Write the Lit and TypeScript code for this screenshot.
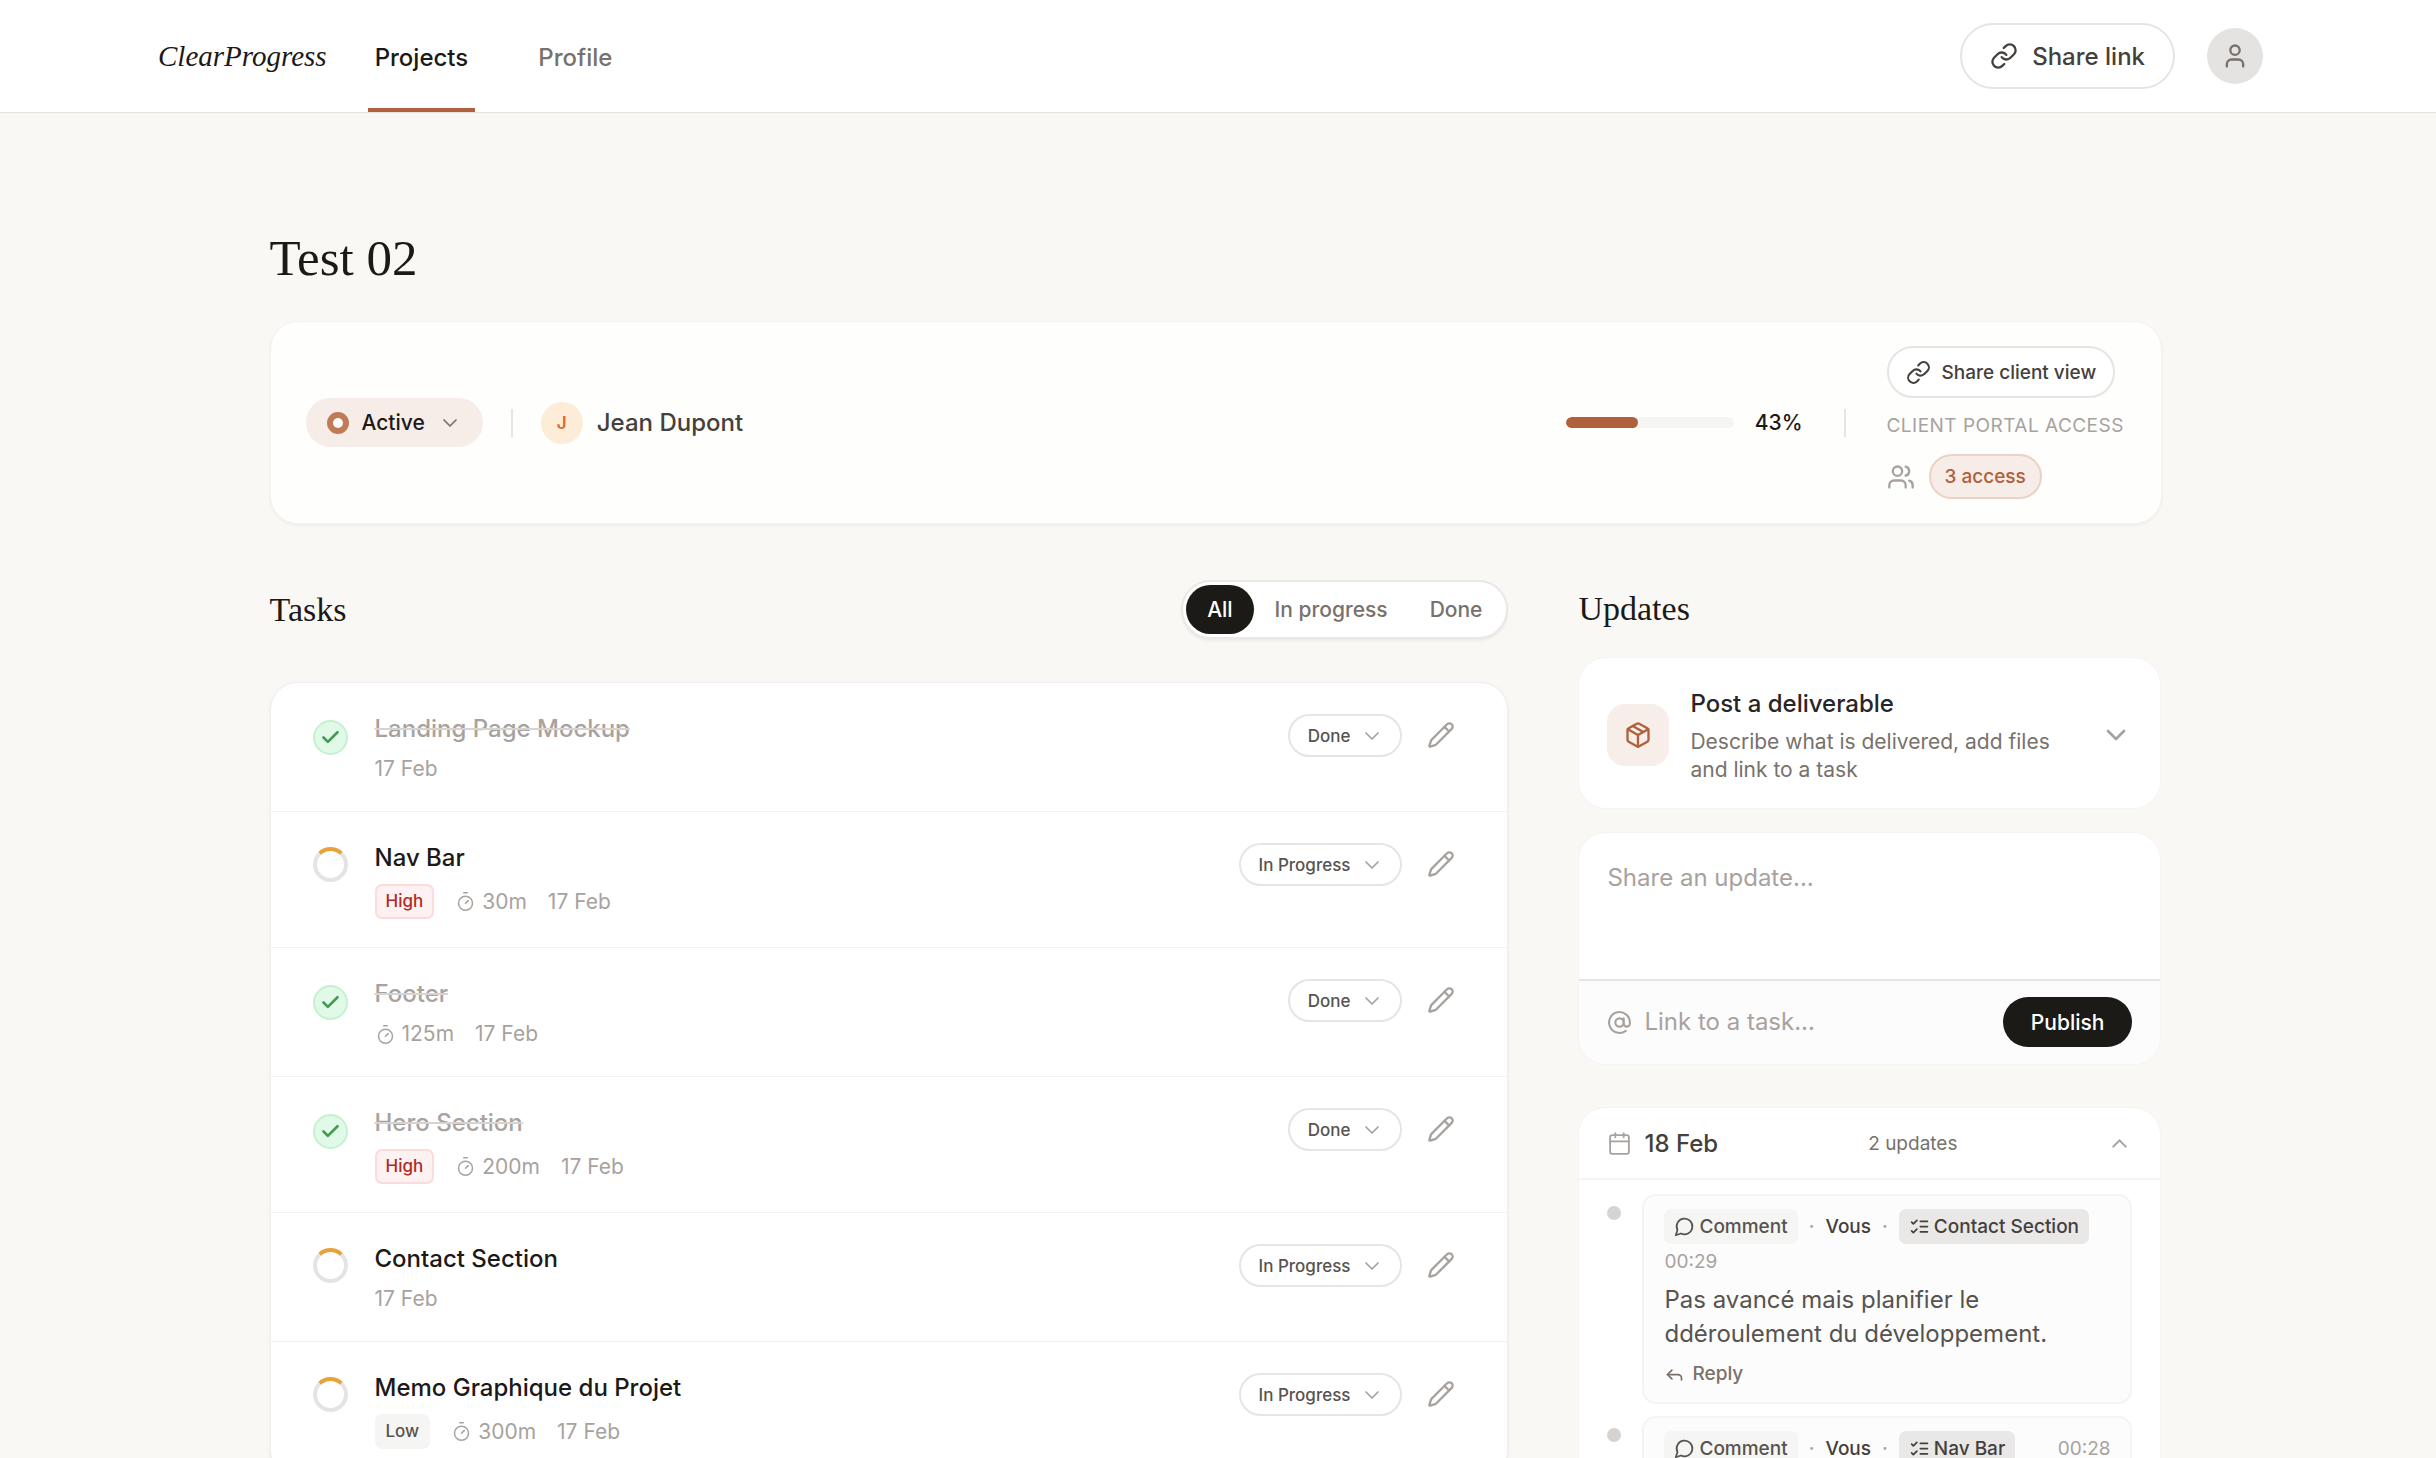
import { LitElement, html, css, svg, nothing, type TemplateResult } from "lit";
import { customElement, property, state } from "lit/decorators.js";
import { classMap } from "lit/directives/class-map.js";

type Status = "Done" | "In Progress";

interface Task {
  title: string;
  status: Status;
  priority?: "High" | "Low";
  minutes?: number;
  date: string;
}

interface Update {
  author: string;
  task: string;
  time: string;
  text?: string;
}

const TASKS: Task[] = [
  { title: "Landing Page Mockup", status: "Done", date: "17 Feb" },
  { title: "Nav Bar", status: "In Progress", priority: "High", minutes: 30, date: "17 Feb" },
  { title: "Footer", status: "Done", minutes: 125, date: "17 Feb" },
  { title: "Hero Section", status: "Done", priority: "High", minutes: 200, date: "17 Feb" },
  { title: "Contact Section", status: "In Progress", date: "17 Feb" },
  { title: "Memo Graphique du Projet", status: "In Progress", priority: "Low", minutes: 300, date: "17 Feb" },
];

const UPDATES: Update[] = [
  {
    author: "Vous",
    task: "Contact Section",
    time: "00:29",
    text: "Pas avancé mais planifier le ddéroulement du développement.",
  },
  { author: "Vous", task: "Nav Bar", time: "00:28" },
];

const ICONS: Record<string, TemplateResult> = {
  link: svg`<path d="M10 13a5 5 0 0 0 7.54.54l3-3a5 5 0 0 0-7.07-7.07l-1.72 1.71"/><path d="M14 11a5 5 0 0 0-7.54-.54l-3 3a5 5 0 0 0 7.07 7.07l1.71-1.71"/>`,
  user: svg`<path d="M19 21v-2a4 4 0 0 0-4-4H9a4 4 0 0 0-4 4v2"/><circle cx="12" cy="7" r="4"/>`,
  users: svg`<path d="M16 21v-2a4 4 0 0 0-4-4H6a4 4 0 0 0-4 4v2"/><circle cx="9" cy="7" r="4"/><path d="M22 21v-2a4 4 0 0 0-3-3.87"/><path d="M16 3.13a4 4 0 0 1 0 7.75"/>`,
  down: svg`<path d="m6 9 6 6 6-6"/>`,
  up: svg`<path d="m18 15-6-6-6 6"/>`,
  check: svg`<path d="M20 6 9 17l-5-5"/>`,
  pencil: svg`<path d="M21.174 6.812a1 1 0 0 0-3.986-3.987L3.842 16.174a2 2 0 0 0-.5.83l-1.321 4.352a.5.5 0 0 0 .623.622l4.353-1.32a2 2 0 0 0 .83-.497z"/><path d="m15 5 4 4"/>`,
  timer: svg`<path d="M10 2h4"/><path d="m12 14 3-3"/><circle cx="12" cy="14" r="8"/>`,
  package: svg`<path d="M11 21.73a2 2 0 0 0 2 0l7-4A2 2 0 0 0 21 16V8a2 2 0 0 0-1-1.73l-7-4a2 2 0 0 0-2 0l-7 4A2 2 0 0 0 3 8v8a2 2 0 0 0 1 1.73z"/><path d="M12 22V12"/><path d="M3.29 7 12 12l8.71-5"/><path d="m7.5 4.27 9 5.15"/>`,
  at: svg`<circle cx="12" cy="12" r="4"/><path d="M16 8v5a3 3 0 0 0 6 0v-1a10 10 0 1 0-4 8"/>`,
  calendar: svg`<path d="M8 2v4"/><path d="M16 2v4"/><rect x="3" y="4" width="18" height="18" rx="2"/><path d="M3 10h18"/>`,
  message: svg`<path d="M7.9 20A9 9 0 1 0 4 16.1L2 22Z"/>`,
  checks: svg`<path d="m3 17 2 2 4-4"/><path d="m3 7 2 2 4-4"/><path d="M13 6h8"/><path d="M13 12h8"/><path d="M13 18h8"/>`,
  reply: svg`<path d="M9 17 4 12 9 7"/><path d="M20 18v-2a4 4 0 0 0-4-4H4"/>`,
};

@customElement("app-icon")
class AppIcon extends LitElement {
  static styles = css`
    :host {
      display: inline-flex;
      flex: none;
      width: 28px;
      height: 28px;
    }
    svg {
      width: 100%;
      height: 100%;
      fill: none;
      stroke: currentColor;
      stroke-linecap: round;
      stroke-linejoin: round;
    }
  `;

  @property() name = "";
  @property({ type: Number }) weight = 1.75;

  render() {
    return html`<svg viewBox="0 0 24 24" stroke-width=${this.weight} aria-hidden="true">${ICONS[this.name]}</svg>`;
  }
}

const base = css`
  * {
    box-sizing: border-box;
  }
  h1,
  h2,
  h3,
  p {
    margin: 0;
    padding: 0;
  }
  button,
  select,
  input,
  textarea {
    margin: 0;
    padding: 0;
    border: 0;
    background: none;
    color: inherit;
    font: inherit;
  }
  button,
  select {
    cursor: pointer;
  }
  a {
    color: inherit;
    text-decoration: none;
  }
  .picker {
    display: inline-grid;
    align-items: center;
    flex: none;
  }
  .picker > * {
    grid-area: 1 / 1;
  }
  .picker select {
    appearance: none;
    field-sizing: content;
  }
  .picker app-icon {
    justify-self: end;
    pointer-events: none;
  }
`;

@customElement("top-bar")
class TopBar extends LitElement {
  static styles = [
    base,
    css`
      :host {
        display: block;
        background: #fff;
        border-bottom: 1px solid #e4e3e1;
        padding-right: 6px;
      }
      .inner {
        display: flex;
        align-items: center;
        max-width: 2114px;
        height: 112px;
        margin: 0 auto;
        padding-right: 9px;
      }
      .logo {
        font: italic 29px/36px "Liberation Serif", serif;
        margin-right: 41px;
      }
      .nav {
        display: flex;
        align-self: stretch;
        gap: 56px;
      }
      .tab {
        display: flex;
        align-items: center;
        padding: 6px 7px 0;
        border-bottom: 4px solid transparent;
        color: #78716c;
        font-size: 24px;
        font-weight: 500;
      }
      .tab.current {
        color: #1c1917;
        border-color: #b0603a;
      }
      .share {
        display: flex;
        align-items: center;
        gap: 14px;
        height: 66px;
        margin-left: auto;
        padding: 0 28px;
        border: 2px solid #e7e5e4;
        border-radius: 33px;
        color: #44403c;
        font-size: 24px;
        font-weight: 500;
      }
      .avatar {
        display: grid;
        place-items: center;
        width: 56px;
        height: 56px;
        margin-left: 32px;
        border-radius: 50%;
        background: #e5e3e1;
        color: #78716c;
      }
    `,
  ];

  render() {
    return html`
      <header class="inner">
        <a class="logo" href="#">ClearProgress</a>
        <nav class="nav">
          <a class="tab current" href="#projects" aria-current="page">Projects</a>
          <a class="tab" href="#profile">Profile</a>
        </nav>
        <button class="share" type="button"><app-icon name="link" weight="2"></app-icon>Share link</button>
        <button class="avatar" type="button" aria-label="Account">
          <app-icon name="user" weight="2"></app-icon>
        </button>
      </header>
    `;
  }
}

@customElement("project-summary")
class ProjectSummary extends LitElement {
  static styles = [
    base,
    css`
      :host {
        display: flex;
        align-items: center;
        padding: 24px 35px;
        border: 1px solid #f3f2ef;
        border-radius: 28px;
        background: #fefefc;
        box-shadow: 0 2px 3px rgba(28, 25, 23, 0.04);
      }
      .active {
        border-radius: 25px;
        background: #f6ece8;
        color: #1c1917;
        font-size: 21px;
        font-weight: 500;
      }
      .active select {
        height: 49px;
        padding: 0 58px 0 56px;
        border-radius: 25px;
      }
      .active app-icon {
        width: 24px;
        height: 24px;
        margin-right: 21px;
        color: #78716c;
      }
      .ring {
        width: 22px;
        height: 22px;
        margin-left: 21px;
        border: 6px solid #c07b56;
        border-radius: 50%;
        background: #fff;
        pointer-events: none;
      }
      .rule {
        width: 2px;
        height: 28px;
        margin: 0 28px;
        background: #e7e5e4;
      }
      .rule.wide {
        margin: 0 41px;
      }
      .initial {
        display: grid;
        place-items: center;
        width: 42px;
        height: 42px;
        margin-right: 14px;
        border-radius: 50%;
        background: #fdecd8;
        color: #dc6430;
        font-size: 17px;
        font-weight: 600;
      }
      .client {
        flex: 1;
        color: #44403c;
        font-size: 24px;
        font-weight: 500;
      }
      .track {
        width: 168px;
        height: 11px;
        margin-right: 21px;
        border-radius: 6px;
        background: #f5f5f4;
        overflow: hidden;
      }
      .fill {
        height: 100%;
        border-radius: 6px;
        background: #b0603a;
      }
      .percent {
        color: #1c1917;
        font-size: 21px;
        font-weight: 500;
      }
      .portal {
        display: flex;
        flex-direction: column;
        align-items: flex-start;
        gap: 14px;
        min-width: 239px;
      }
      .view {
        display: flex;
        align-items: center;
        gap: 11px;
        height: 52px;
        padding: 0 17px;
        border: 2px solid #e7e5e4;
        border-radius: 26px;
        background: #fff;
        color: #44403c;
        font-size: 19px;
        font-weight: 500;
      }
      .view app-icon {
        width: 25px;
        height: 25px;
      }
      .label {
        color: #a8a29e;
        font-size: 19px;
        font-weight: 400;
        line-height: 28px;
        letter-spacing: 0.025em;
        text-transform: uppercase;
      }
      .access {
        display: flex;
        align-items: center;
        gap: 14px;
        color: #a8a29e;
      }
      .count {
        height: 45px;
        padding: 0 14px;
        border: 2px solid #ecd2c6;
        border-radius: 23px;
        background: #f6ece8;
        color: #b0603a;
        font-size: 19px;
        font-weight: 500;
      }
    `,
  ];

  @property({ type: Number }) progress = 0;

  render() {
    return html`
      <div class="picker active">
        <select aria-label="Project status">
          <option>Active</option>
        </select>
        <span class="ring"></span>
        <app-icon name="down"></app-icon>
      </div>
      <span class="rule"></span>
      <span class="initial">J</span>
      <span class="client">Jean Dupont</span>
      <div class="track" role="progressbar" aria-label="Progress" aria-valuenow=${this.progress}>
        <div class="fill" style="width:${this.progress}%"></div>
      </div>
      <span class="percent">${this.progress}%</span>
      <span class="rule wide"></span>
      <div class="portal">
        <button class="view" type="button"><app-icon name="link" weight="2"></app-icon>Share client view</button>
        <h3 class="label">Client portal access</h3>
        <div class="access">
          <app-icon name="users" weight="2"></app-icon>
          <button class="count" type="button">3 access</button>
        </div>
      </div>
    `;
  }
}

@customElement("task-row")
class TaskRow extends LitElement {
  static styles = [
    base,
    css`
      :host {
        display: flex;
        align-items: flex-start;
        padding: 28px 52px 28px 42px;
        border-bottom: 1px solid #f3f2f1;
      }
      .state {
        display: grid;
        place-items: center;
        margin: 7px 27px 0 0;
      }
      .state > * {
        grid-area: 1 / 1;
      }
      .state input {
        appearance: none;
        width: 35px;
        height: 35px;
        border: 4px solid #e5e4e3;
        border-top-color: #e9a13b;
        border-radius: 50%;
      }
      .state.done {
        margin-top: 9px;
      }
      .state.done input {
        border: 2px solid #c4f2d0;
        background: #e1f9e7;
      }
      .state app-icon {
        width: 21px;
        height: 21px;
        color: #449a52;
        pointer-events: none;
      }
      .body {
        flex: 1;
        min-width: 0;
      }
      .title {
        color: #1c1917;
        font-size: 24px;
        font-weight: 500;
        line-height: 36px;
      }
      .title.done {
        color: #a8a29e;
        text-decoration: line-through #d6d3d1 2px;
      }
      .meta {
        display: flex;
        align-items: center;
        gap: 21px;
        margin-top: 8px;
        color: #a8a29e;
        font-size: 21px;
        line-height: 28px;
      }
      .tag {
        padding: 0 9px;
        border: 2px solid #fadcdc;
        border-radius: 7px;
        background: #fdf1f1;
        color: #b02a25;
        font-size: 17px;
        font-weight: 500;
        line-height: 31px;
      }
      .tag.low {
        border-color: #f5f5f4;
        background: #f5f5f4;
        color: #57534e;
      }
      .time {
        display: flex;
        align-items: center;
        gap: 6px;
      }
      .time app-icon {
        width: 21px;
        height: 21px;
      }
      .status {
        margin-top: 3px;
        color: #57534e;
        font-size: 17px;
        font-weight: 500;
      }
      .status select {
        height: 43px;
        padding: 0 50px 0 18px;
        border: 2px solid #e7e5e4;
        border-radius: 22px;
      }
      .status app-icon {
        width: 24px;
        height: 24px;
        margin-right: 18px;
        color: #a8a29e;
      }
      .edit {
        display: grid;
        place-items: center;
        margin: 10px 0 0 25px;
        color: #a8a29e;
      }
    `,
  ];

  @property({ attribute: false }) task!: Task;

  render() {
    const { title, status, priority, minutes, date } = this.task;
    const done = status === "Done";
    return html`
      <span class=${classMap({ state: true, done })}>
        <input type="checkbox" .checked=${done} aria-label="Complete ${title}" />
        ${done ? html`<app-icon name="check" weight="3"></app-icon>` : nothing}
      </span>
      <div class="body">
        <h3 class=${classMap({ title: true, done })}>${title}</h3>
        <div class="meta">
          ${priority ? html`<span class=${classMap({ tag: true, low: priority === "Low" })}>${priority}</span>` : nothing}
          ${minutes ? html`<span class="time"><app-icon name="timer"></app-icon>${minutes}m</span>` : nothing}
          <span>${date}</span>
        </div>
      </div>
      <div class="picker status">
        <select aria-label="Status of ${title}">
          <option ?selected=${done}>Done</option>
          <option ?selected=${!done}>In Progress</option>
        </select>
        <app-icon name="down"></app-icon>
      </div>
      <button class="edit" type="button" aria-label="Edit ${title}">
        <app-icon name="pencil" weight="2"></app-icon>
      </button>
    `;
  }
}

@customElement("update-entry")
class UpdateEntry extends LitElement {
  static styles = [
    base,
    css`
      :host {
        display: flex;
        align-items: flex-start;
        gap: 21px;
      }
      .dot {
        flex: none;
        width: 14px;
        height: 14px;
        margin-top: 12px;
        border-radius: 50%;
        background: #d6d3d1;
      }
      .bubble {
        flex: 1;
        padding: 13px 20px 14px;
        border: 2px solid #f5f4f3;
        border-radius: 14px;
        background: #fcfcfc;
      }
      .head {
        display: flex;
        flex-wrap: wrap;
        align-items: center;
        justify-content: space-between;
        row-gap: 4px;
        color: #a8a29e;
        font-size: 19px;
        line-height: 28px;
      }
      .who {
        display: flex;
        align-items: center;
        gap: 11px;
        color: #44403c;
        font-weight: 500;
      }
      .sep {
        color: #a8a29e;
      }
      .chip {
        display: flex;
        align-items: center;
        gap: 4px;
        height: 35px;
        padding: 0 10px;
        border-radius: 7px;
        background: #f5f5f4;
        color: #57534e;
      }
      .chip.linked {
        background: #e9e8e6;
        color: #44403c;
      }
      .chip app-icon {
        width: 21px;
        height: 21px;
      }
      .text {
        margin-top: 7px;
        color: #57534e;
        font-size: 24px;
        line-height: 34px;
      }
      .reply {
        display: flex;
        align-items: center;
        gap: 7px;
        margin-top: 9px;
        color: #78716c;
        font-size: 19px;
        font-weight: 500;
        line-height: 28px;
      }
      .reply app-icon {
        width: 21px;
        height: 21px;
      }
    `,
  ];

  @property({ attribute: false }) entry!: Update;

  render() {
    const { author, task, time, text } = this.entry;
    return html`
      <span class="dot"></span>
      <article class="bubble">
        <div class="head">
          <div class="who">
            <span class="chip"><app-icon name="message" weight="2"></app-icon>Comment</span>
            <span class="sep">·</span>
            <span>${author}</span>
            <span class="sep">·</span>
            <a class="chip linked" href="#task"><app-icon name="checks" weight="2"></app-icon>${task}</a>
          </div>
          <time>${time}</time>
        </div>
        ${text
          ? html`<p class="text">${text}</p>
              <button class="reply" type="button"><app-icon name="reply" weight="2"></app-icon>Reply</button>`
          : nothing}
      </article>
    `;
  }
}

@customElement("updates-panel")
class UpdatesPanel extends LitElement {
  static styles = [
    base,
    css`
      :host {
        display: block;
      }
      .heading {
        margin-bottom: 19px;
        font: 400 34px/58px "Liberation Serif", serif;
      }
      .card {
        border: 1px solid #f5f4f1;
        border-radius: 28px;
        background: #fff;
        overflow: hidden;
      }
      .deliver {
        display: flex;
        align-items: center;
        gap: 21px;
        width: 100%;
        padding: 28px 28px 24px;
        text-align: left;
      }
      .tile {
        display: grid;
        place-items: center;
        flex: none;
        width: 62px;
        height: 62px;
        border-radius: 18px;
        background: #f7ede9;
        color: #b0603a;
      }
      .copy {
        flex: 1;
        color: #78716c;
        font-size: 21px;
        line-height: 28px;
      }
      .strong {
        display: block;
        margin-bottom: 6px;
        color: #292524;
        font-size: 24px;
        font-weight: 500;
        line-height: 36px;
      }
      .toggle {
        margin-left: 12px;
        width: 32px;
        height: 32px;
        color: #a8a29e;
      }
      .compose {
        margin-top: 23px;
      }
      .draft {
        display: block;
        width: 100%;
        height: 146px;
        padding: 27px 28px 0;
        font-size: 24px;
        line-height: 36px;
        resize: none;
      }
      ::placeholder {
        color: #a8a29e;
        opacity: 1;
      }
      .foot {
        display: flex;
        align-items: center;
        gap: 12px;
        padding: 16px 28px 17px;
        border-top: 2px solid #e7e5e4;
        background: #fcfcfc;
        color: #a8a29e;
      }
      .foot label {
        display: flex;
      }
      .foot app-icon,
      .date app-icon {
        width: 25px;
        height: 25px;
      }
      .foot input {
        flex: 1;
        width: 0;
        font-size: 24px;
        line-height: 36px;
      }
      .publish {
        height: 50px;
        padding: 0 28px;
        border-radius: 25px;
        background: #1c1a17;
        color: #fff;
        font-size: 21px;
        font-weight: 500;
      }
      .feed {
        margin-top: 42px;
      }
      .day {
        display: flex;
        align-items: center;
        justify-content: space-between;
        width: 100%;
        height: 72px;
        padding: 0 28px;
        border-bottom: 2px solid #f5f4f3;
        color: #a8a29e;
      }
      .day > app-icon {
        width: 25px;
        height: 25px;
      }
      .date {
        display: flex;
        align-items: center;
        gap: 12px;
      }
      .date span {
        color: #44403c;
        font-size: 24px;
        font-weight: 500;
      }
      .total {
        color: #78716c;
        font-size: 19px;
      }
      .entries {
        display: grid;
        gap: 12px;
        padding: 14px 28px 28px;
      }
    `,
  ];

  render() {
    return html`
      <h2 class="heading">Updates</h2>
      <div class="card">
        <button class="deliver" type="button">
          <span class="tile"><app-icon name="package" weight="2"></app-icon></span>
          <span class="copy"
            ><span class="strong">Post a deliverable</span>Describe what is delivered, add files and link to a
            task</span
          >
          <app-icon class="toggle" name="down" weight="2"></app-icon>
        </button>
      </div>
      <form class="card compose">
        <textarea class="draft" placeholder="Share an update..." aria-label="Share an update"></textarea>
        <div class="foot">
          <label for="task-link" aria-label="Link to a task"><app-icon name="at" weight="2"></app-icon></label>
          <input id="task-link" type="text" placeholder="Link to a task..." />
          <button class="publish" type="button">Publish</button>
        </div>
      </form>
      <section class="card feed">
        <button class="day" type="button" aria-expanded="true">
          <span class="date"><app-icon name="calendar"></app-icon><span>18 Feb</span></span>
          <span class="total">${UPDATES.length} updates</span>
          <app-icon name="up" weight="2"></app-icon>
        </button>
        <div class="entries">${UPDATES.map((u) => html`<update-entry .entry=${u}></update-entry>`)}</div>
      </section>
    `;
  }
}

@customElement("app-root")
class AppRoot extends LitElement {
  static styles = [
    base,
    css`
      :host {
        display: block;
        height: 100vh;
        overflow-y: auto;
        scrollbar-width: none;
        background: #f9f8f5;
        color: #1c1917;
        font-family: Inter, "Liberation Sans", sans-serif;
        font-size: 21px;
      }
      .page {
        padding: 115px 30px 0 25px;
      }
      .column {
        max-width: 1892px;
        margin: 0 auto;
      }
      .project {
        margin-bottom: 33px;
        font: 400 51px/60px "Liberation Serif", serif;
      }
      .split {
        display: grid;
        grid-template-columns: minmax(0, 17fr) minmax(0, 8fr);
        gap: 70px;
        margin-top: 56px;
      }
      .bar {
        display: flex;
        align-items: center;
        justify-content: space-between;
        margin-bottom: 43px;
      }
      .section {
        font: 400 34px/58px "Liberation Serif", serif;
      }
      .filters {
        display: flex;
        padding: 3px;
        border: 2px solid #e9e8e6;
        border-radius: 30px;
        background: #fff;
        box-shadow: 0 2px 3px rgba(28, 25, 23, 0.06);
      }
      .filter {
        height: 49px;
        padding: 0 21px;
        border-radius: 25px;
        color: #78716c;
        font-size: 21px;
        font-weight: 500;
      }
      .filter.on {
        background: #1c1a17;
        color: #fff;
      }
      .tasks {
        border: 1px solid #efeeec;
        border-radius: 28px;
        background: #fff;
        box-shadow: 0 1px 4px rgba(28, 25, 23, 0.05);
      }
    `,
  ];

  @state() private filter = "All";

  private get visible() {
    return TASKS.filter((t) => this.filter === "All" || t.status.toLowerCase() === this.filter.toLowerCase());
  }

  render() {
    return html`
      <top-bar></top-bar>
      <main class="page">
        <div class="column">
          <h1 class="project">Test 02</h1>
          <project-summary progress="43"></project-summary>
          <div class="split">
            <section>
              <div class="bar">
                <h2 class="section">Tasks</h2>
                <div class="filters">
                  ${["All", "In progress", "Done"].map(
                    (name) => html`<button
                      type="button"
                      class=${classMap({ filter: true, on: this.filter === name })}
                      @click=${() => (this.filter = name)}
                    >${name}</button>`,
                  )}
                </div>
              </div>
              <div class="tasks">${this.visible.map((t) => html`<task-row .task=${t}></task-row>`)}</div>
            </section>
            <updates-panel></updates-panel>
          </div>
        </div>
      </main>
    `;
  }
}
